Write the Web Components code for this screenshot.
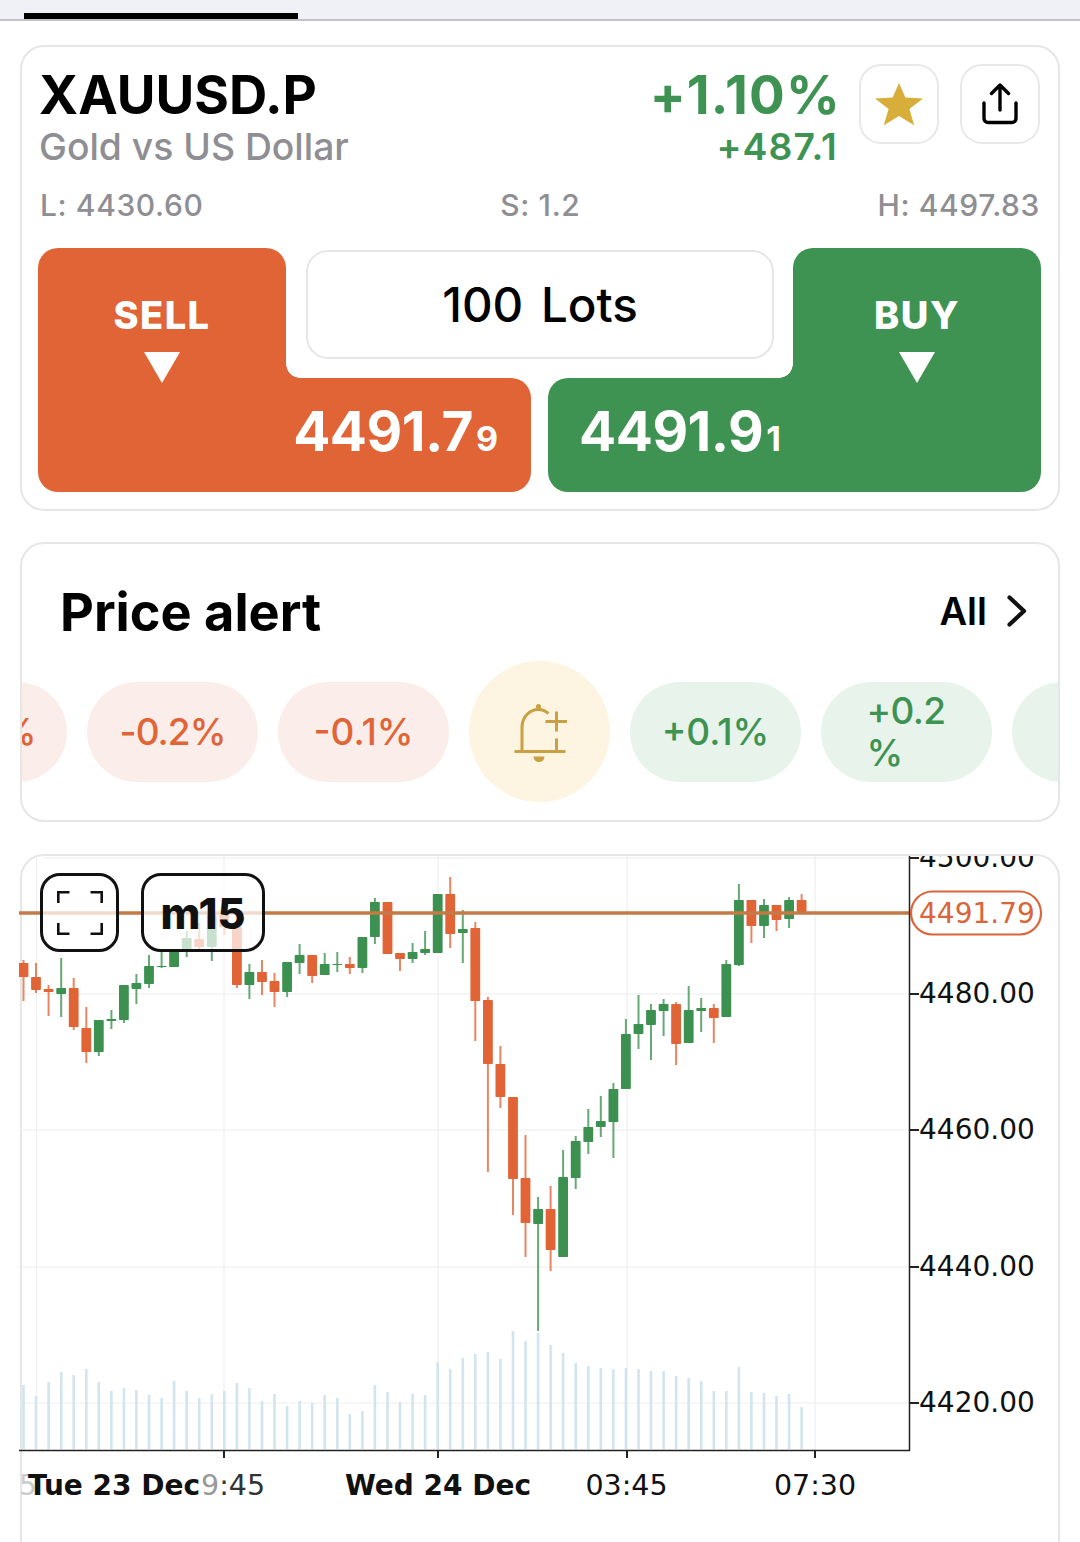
<!DOCTYPE html>
<html>
<head>
<meta charset="utf-8">
<style>
	html, body { margin: 0; padding: 0; background: #fff; }
	body { width: 1080px; height: 1542px; overflow: hidden; font-family: Inter, "Liberation Sans", sans-serif; color: #000; }
</style>
</head>
<body>
<top-strip></top-strip>
<quote-card></quote-card>
<price-alert></price-alert>
<chart-card>
	<chart-button><svg width="46" height="44" viewBox="0 0 46 44" fill="none" stroke="#111" stroke-width="2.600"><path d="M1.300 12V1.300H12.500M33.500 1.300H44.700V12M1.300 32V42.700H12.500M33.500 42.700H44.700V32"/></svg></chart-button>
	<chart-button wide>m15</chart-button>
</chart-card>

<script>
(function() {
	function define(name, css, html, extra) {
		class El extends HTMLElement {
			constructor() {
				super();
				this._shadowRoot = this.attachShadow({mode: "open"});
				this._shadowRoot.innerHTML = `<style>${css}</style>${html}`;
				if (extra) extra(this._shadowRoot);
			}
		}
		customElements.define(name, El);
	}

	define("top-strip", `
		:host { display: block; height: 21px; box-sizing: border-box; background: #f0f1f6; border-bottom: 2px solid #c2c2c6; }
		div { width: 274px; height: 6px; margin-left: 24px; position: relative; top: 13px; background: #000; }
	`, `<div></div>`);

	define("icon-button", `
		:host { flex: none; display: flex; align-items: center; justify-content: center; width: 80px; height: 80px; box-sizing: border-box; border: 2px solid #e8e8e8; border-radius: 22px; background: #fff; }
	`, `<slot></slot>`);

	define("trade-panel", `
		:host { display: grid; grid-template-columns: 248px 245px 17px 245px 248px; grid-template-rows: 130px 114px; color: #fff; font-weight: 700; }
		.bar { grid-row: 2; display: flex; align-items: center; box-sizing: border-box; padding-bottom: 8px; font-size: 55px; letter-spacing: -0.5px; }
		.bar small { font-size: 34px; letter-spacing: 0; margin-left: 3px; }
		.sell-bar { grid-column: 1 / 3; background: #e06436; border-radius: 0 20px 20px 20px; justify-content: flex-end; padding-right: 33px; }
		.buy-bar { grid-column: 4 / 6; background: #3e9352; border-radius: 20px 0 20px 20px; padding-left: 31px; }
		.tab { grid-row: 1; position: relative; display: flex; flex-direction: column; align-items: center; padding-top: 44px; box-sizing: border-box; font-size: 38px; line-height: 46px; font-weight: 800; letter-spacing: 1.5px; }
		.tab i { display: block; flex: none; width: 36px; height: 31px; margin-top: 14px; background: #fff; clip-path: polygon(0 0, 100% 0, 50% 100%); }
		.tab::after { content: ""; position: absolute; bottom: 0; width: 14px; height: 14px; }
		.sell-tab { grid-column: 1; background: #e06436; border-radius: 20px 20px 0 0; }
		.sell-tab::after { left: 100%; background: radial-gradient(circle at 100% 0, transparent 13.5px, #e06436 14px); }
		.buy-tab { grid-column: 5; background: #3e9352; border-radius: 20px 20px 0 0; }
		.buy-tab::after { right: 100%; background: radial-gradient(circle at 0 0, transparent 13.5px, #3e9352 14px); }
		.lots { grid-column: 2 / 5; grid-row: 1; margin: 2px 19px 19px 20px; border: 2px solid #e6e6e6; border-radius: 22px; display: flex; align-items: center; justify-content: center; color: #000; font-size: 47.500px; font-weight: 500; letter-spacing: 0; word-spacing: 5px; }
	`, `
		<div class="bar sell-bar"><span>4491.7<small>9</small></span></div>
		<div class="bar buy-bar"><span>4491.9<small>1</small></span></div>
		<div class="tab sell-tab">SELL<i></i></div>
		<div class="lots">100 Lots</div>
		<div class="tab buy-tab">BUY<i></i></div>
	`);

	define("quote-card", `
		:host { display: block; margin: 24px 20px 0; padding: 18px 18px 17px; border: 2px solid #e6e6e6; border-radius: 24px; background: #fff; }
		.head { display: flex; align-items: flex-start; }
		.names { flex: 1; padding-top: 4px; margin-left: -1px; }
		.big { font-size: 53px; line-height: 52px; font-weight: 700; }
		.sub { font-size: 37.300px; line-height: 40px; font-weight: 500; margin-top: 6px; }
		.names .sub { color: #8e8e93; }
		.quote { padding-top: 4px; text-align: right; color: #3e9352; margin-right: 21px; }
		.quote .big { letter-spacing: 1.200px; margin-right: -3px; }
		.quote .sub { font-weight: 600; letter-spacing: 1.100px; }
		.btns { display: flex; gap: 21px; margin-top: -1px; }
		.stats { display: flex; justify-content: space-between; margin-top: 20px; font-size: 30px; line-height: 36px; font-weight: 500; color: #8e8e93; letter-spacing: 0.6px; }
		trade-panel { margin: 25px -1px 0 -2px; }
	`, `
		<div class="head">
			<div class="names">
				<div class="big">XAUUSD.P</div>
				<div class="sub">Gold vs US Dollar</div>
			</div>
			<div class="quote">
				<div class="big">+1.10%</div>
				<div class="sub">+487.1</div>
			</div>
			<div class="btns">
				<icon-button><svg width="50" height="44" viewBox="0 0 50 44"><path fill="#d8ae3b" d="M25 1l6.400 14.600 17.600.9-13.600 10.400 4.800 16.300L25 34l-15.200 9.200 4.800-16.300L1 16.500l17.600-.9z"/></svg></icon-button>
				<icon-button><svg width="36" height="42" viewBox="0 0 36 42" fill="none" stroke="#000" stroke-width="3.400" stroke-linecap="round" stroke-linejoin="round"><path d="M18 27V3M9.500 10.500L18 2l8.500 8.500M2 20v15.500a4 4 0 0 0 4 4h24a4 4 0 0 0 4-4V20"/></svg></icon-button>
			</div>
		</div>
		<div class="stats"><span>L: 4430.60</span><span>S: 1.2</span><span>H: 4497.83</span></div>
		<trade-panel></trade-panel>
	`);

	define("alert-chip", `
		:host { flex: none; display: flex; align-items: center; justify-content: center; width: 171px; height: 100px; border-radius: 50px; font-size: 37px; line-height: 42px; font-weight: 500; white-space: nowrap; }
		:host([tone="down"]) { background: #fbeeea; color: #e06436; }
		:host([tone="up"]) { background: #e8f3ec; color: #3e9352; }
	`, `<slot></slot>`);

	define("price-alert", `
		:host { display: block; margin: 31px 20px 0; border: 2px solid #e6e6e6; border-radius: 24px; overflow: hidden; background: #fff; padding: 39px 0 18px; }
		.head { display: flex; justify-content: space-between; align-items: center; padding: 0 31px 0 38px; height: 60px; }
		h2 { margin: 0 0 2px; font-size: 52.300px; line-height: 58px; font-weight: 700; }
		.all { display: flex; align-items: center; gap: 19px; margin-top: -4px; font-size: 38px; font-weight: 600; }
		.row { display: flex; align-items: center; gap: 20px; margin: 18px 0 0 -126px; height: 141px; }
		.bell { flex: none; display: flex; align-items: center; justify-content: center; width: 141px; height: 141px; border-radius: 50%; background: #fdf5e2; }
		.tight { letter-spacing: -1px; }
		.wrap { letter-spacing: -0.7px; margin-left: -1px; }
	`, `
		<div class="head">
			<h2>Price alert</h2>
			<div class="all">All <svg width="21" height="32" viewBox="0 0 21 32" fill="none" stroke="#111" stroke-width="4.200" stroke-linecap="round" stroke-linejoin="round"><path d="M3.500 2.500L18 16 3.500 29.500"/></svg></div>
		</div>
		<div class="row">
			<alert-chip tone="down">-0.3%</alert-chip>
			<alert-chip tone="down"><span class="tight">-0.2%</span></alert-chip>
			<alert-chip tone="down">-0.1%</alert-chip>
			<div class="bell"><svg width="54" height="62" viewBox="512.500 700.500 54 62" fill="none" stroke="#c9a043" stroke-width="3"><path d="M521.500 751V727c0-10 7-18 16.500-18 4 0 7 1.500 10 4"/><path d="M514 751h51M556 738v13M545 721h22M556 711v20"/><circle cx="538" cy="706" r="2.500" fill="#c9a043" stroke="none"/><path d="M533 756h11a5.500 5.500 0 0 1-11 0z" fill="#c9a043" stroke="none"/></svg></div>
			<alert-chip tone="up">+0.1%</alert-chip>
			<alert-chip tone="up"><span class="wrap">+0.2<br>%</span></alert-chip>
			<alert-chip tone="up"><span class="wrap">+0.3<br>%</span></alert-chip>
		</div>
	`);

	define("chart-button", `
		:host { display: flex; align-items: center; justify-content: center; box-sizing: border-box; width: 79px; height: 79px; border: 3px solid #111; border-radius: 20px; background: rgba(255,255,255,.72); color: #111; font-size: 43px; font-weight: 800; }
		:host([wide]) { width: 124px; }
	`, `<slot></slot>`);

	define("chart-card", `
		:host { display: block; position: relative; height: 720px; margin: 32px 20px 0; border: 2px solid #e6e6e6; border-radius: 24px; background: #fff; }
		.tools { position: absolute; left: 18px; top: 17px; display: flex; gap: 22px; }
	`, `<candle-chart></candle-chart><div class="tools"><slot></slot></div>`);

	// [bodyTop, bodyBottom, wickTop, wickBottom, green?] in page pixels, read off the reference
	const candles = [
		[963,977,960,1001,0],[977,990,963,993,0],[989,992,985,1016,0],[988,994,958,1017,1],[988,1027,978,1030,0],
		[1028,1052,1007,1063,0],[1020,1052,1020,1056,1],[1019,1021,1010,1029,1],[985,1020,985,1023,1],[983,989,974,1004,1],
		[966,984,955,988,1],[966,967,950,968,1],[949,967,949,967,1],[938,949,931,957,1],[939,947,923,950,0],
		[915,947,915,961,1],[915,927,915,935,0],[927,985,927,988,0],[972,985,964,999,1],[972,982,960,995,0],
		[981,992,973,1007,0],[962,992,962,997,1],[955,963,944,974,1],[955,976,955,983,0],[964,975,953,975,1],
		[964,965,952,972,1],[964,968,957,974,0],[937,968,937,973,1],[902,937,898,944,1],[902,954,902,954,0],
		[953,959,953,971,0],[952,959,943,963,1],[949,953,931,955,1],[894,953,894,953,1],[894,934,877,948,0],
		[929,933,910,963,1],[928,1001,922,1041,0],[1000,1064,997,1172,0],[1064,1097,1046,1108,0],[1097,1179,1097,1215,0],
		[1178,1223,1135,1257,0],[1209,1224,1197,1331,1],[1209,1250,1186,1271,0],[1177,1257,1150,1257,1],[1141,1178,1136,1189,1],
		[1127,1142,1109,1154,1],[1121,1127,1096,1137,1],[1089,1122,1083,1158,1],[1034,1089,1019,1089,1],[1024,1034,995,1049,1],
		[1010,1025,1004,1060,1],[1004,1011,999,1036,1],[1004,1044,1002,1065,0],[1010,1043,986,1043,1],[1008,1011,998,1032,1],
		[1008,1018,1004,1043,0],[964,1017,960,1017,1],[900,965,884,966,1],[900,926,900,943,0],[905,926,899,938,1],
		[905,920,905,931,0],[900,919,897,928,1],[900,912,894,912,0]
	];
	const volumes = [
		1385,1396,1382,1372,1375,1369,1382,1391,1388,1390,1395,1398,1381,1391,1398,1394,1391,1383,1388,1401,
		1394,1406,1401,1403,1395,1398,1414,1411,1385,1392,1402,1394,1395,1362,1369,1358,1354,1352,1359,1331,
		1341,1333,1345,1353,1363,1366,1368,1369,1368,1369,1371,1371,1376,1378,1381,1391,1391,1367,1392,1393,
		1396,1394,1407
	];

	function chartMarkup() {
		const mid = i => (23.5 + 12.55 * i).toFixed(1);
		let s = "";
		s += `<line x1="44" x2="909" y1="858" y2="858" stroke="#eee" stroke-width="1.200"/>`;
		[994, 1130, 1267, 1403].forEach(y => { s += `<line x1="19" x2="909" y1="${y}" y2="${y}" stroke="#eee" stroke-width="1.200"/>`; });
		[36.5, 224, 438, 627, 815].forEach(x => { s += `<line x1="${x}" x2="${x}" y1="856" y2="1450" stroke="#eee" stroke-width="1.200"/>`; });
		volumes.forEach((top, i) => { s += `<rect x="${mid(i) - 1.3}" y="${top}" width="2.600" height="${1449 - top}" fill="#d2e5ef"/>`; });
		candles.forEach((c, i) => {
			const col = c[4] ? "#3c9150" : "#e06436";
			s += `<rect x="${mid(i) - 1}" y="${c[2]}" width="2" height="${c[3] - c[2]}" fill="${col}" opacity=".78"/>`;
			s += `<rect x="${mid(i) - 4.9}" y="${c[0]}" width="9.800" height="${c[1] - c[0]}" rx=".8" fill="${col}"/>`;
		});
		s += `<line x1="19" x2="909" y1="913" y2="913" stroke="#c47a46" stroke-width="3.400"/>`;
		s += `<path d="M909.500 856V1450.500H19" fill="none" stroke="#222" stroke-width="1.500"/>`;
		[224, 438, 627, 815].forEach(x => { s += `<line x1="${x}" x2="${x}" y1="1450" y2="1458" stroke="#222" stroke-width="2"/>`; });
		[[858, "4500.00"], [994, "4480.00"], [1130, "4460.00"], [1267, "4440.00"], [1403, "4420.00"]].forEach(r => {
			s += `<line x1="909" x2="919" y1="${r[0]}" y2="${r[0]}" stroke="#222" stroke-width="2"/>`;
			s += `<text x="919" y="${r[0] + 9}">${r[1]}</text>`;
		});
		s += `<rect x="911" y="891.500" width="130" height="43" rx="21.500" fill="#fff" stroke="#d9653a" stroke-width="2.200"/>`;
		s += `<text x="919" y="923" fill="#d9653a">4491.79</text>`;
		s += `<text x="19" y="1495" fill="#ccc">5</text>`;
		s += `<text x="201" y="1495" font-size="28.500"><tspan fill="#999">9</tspan><tspan fill="#333">:45</tspan></text>`;
		s += `<text x="114" y="1495" text-anchor="middle" font-weight="700">Tue 23 Dec</text>`;
		s += `<text x="438" y="1495" text-anchor="middle" font-weight="700">Wed 24 Dec</text>`;
		s += `<text x="626.500" y="1495" text-anchor="middle" font-size="28.500">03:45</text>`;
		s += `<text x="815" y="1495" text-anchor="middle" font-size="28.500">07:30</text>`;
		return s;
	}

	define("candle-chart", `
		:host { display: block; margin-left: -3px; }
		svg { display: block; font-family: "DejaVu Sans", sans-serif; font-size: 28px; fill: #111; }
	`, `<svg width="1039" height="716" viewBox="19 856 1039 716">${chartMarkup()}</svg>`);
})();
</script>
</body>
</html>
